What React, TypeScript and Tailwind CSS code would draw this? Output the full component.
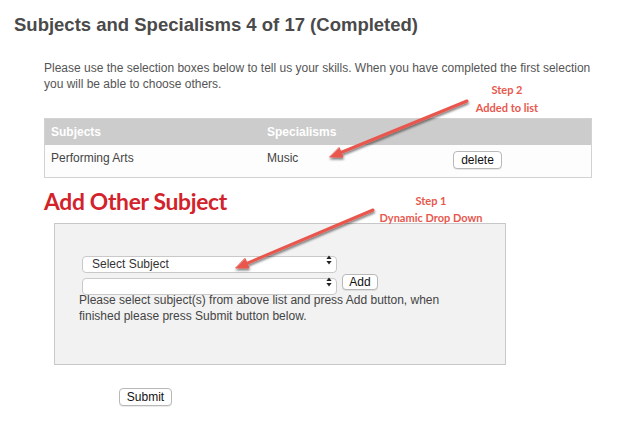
import React from 'react';

const arial = { fontFamily: '"Liberation Sans", Arial, sans-serif' };
const lato = { fontFamily: 'Lato, "Open Sans", sans-serif' };

function UpDown() {
  return (
    <svg width="6" height="10" viewBox="0 0 6 10" className="pointer-events-none absolute right-[5px] top-1/2 -translate-y-1/2">
      <path d="M3 0.5 L5.6 4 H0.4 Z" fill="#222" />
      <path d="M3 9.5 L5.6 6 H0.4 Z" fill="#222" />
    </svg>
  );
}

function FakeSelect({ label }: { label: string }) {
  return (
    <div className="relative h-[17px] w-[255px]">
      <select
        className="h-full w-full appearance-none rounded-[4px] border border-[#c9c9c9] bg-white pl-[9px] text-[12px] leading-[15px] text-[#333] outline-none"
        style={arial}
        defaultValue={label}
      >
        <option value={label}>{label}</option>
      </select>
      <UpDown />
    </div>
  );
}

function SmallButton({ children, className = '' }: { children: React.ReactNode; className?: string }) {
  return (
    <button
      type="button"
      className={`flex items-center justify-center rounded-[4px] border border-[#b8b8b8] bg-white text-[12px] text-[#111] shadow-[0_1px_0_rgba(0,0,0,0.08)] ${className}`}
      style={arial}
    >
      {children}
    </button>
  );
}

function Arrows() {
  return (
    <svg width="629" height="437" className="pointer-events-none absolute left-0 top-0" viewBox="0 0 629 437">
      <defs>
        <filter id="shadow" x="-20%" y="-20%" width="140%" height="140%">
          <feDropShadow dx="0.5" dy="2" stdDeviation="1.3" floodColor="#000" floodOpacity="0.5" />
        </filter>
      </defs>
      <g filter="url(#shadow)" fill="#e8574d" stroke="#e8574d" strokeLinecap="round">
        <line x1="467" y1="101" x2="341" y2="152.5" strokeWidth="3" />
        <path d="M330 157 L343 157.1 L339.2 147.9 Z" strokeWidth="1" strokeLinejoin="round" />
        <line x1="373" y1="210" x2="247" y2="263.3" strokeWidth="3" />
        <path d="M236 268 L249 267.9 L245.1 258.7 Z" strokeWidth="1" strokeLinejoin="round" />
      </g>
    </svg>
  );
}

export default function App() {
  return (
    <div className="relative h-[437px] w-[629px] overflow-hidden bg-white" style={arial}>
      <h1 className="pl-[14px] pt-[14px] text-[18.5px] font-bold leading-[22px] text-[#4a4a4a]">
        Subjects and Specialisms 4 of 17 (Completed)
      </h1>

      <div className="ml-[44px] w-[548px]">
        <p className="mt-[24px] text-[12px] leading-[16px] text-[#555]">
          Please use the selection boxes below to tell us your skills. When you have completed the first selection
          you will be able to choose others.
        </p>

        <div className="mt-[26px] border border-[#d2d2d2]">
          <div className="flex h-[26px] items-center bg-[#cccccc] text-[12px] font-bold text-white">
            <div className="w-[216px] pl-[6px]">Subjects</div>
            <div className="pl-[6px]">Specialisms</div>
          </div>
          <div className="flex h-[32px] items-start bg-[#fdfdfd] text-[12px] leading-[16px] text-[#444]">
            <div className="w-[216px] pl-[6px] pt-[5px]">Performing Arts</div>
            <div className="w-[186px] pl-[6px] pt-[5px]">Music</div>
            <div className="pl-[6px] pt-[6px]">
              <SmallButton className="h-[18px] w-[49px]">delete</SmallButton>
            </div>
          </div>
        </div>

        <h2 className="mt-[9px] text-[22.8px] font-bold leading-[28px] tracking-[-0.3px] text-[#d2232a]" style={lato}>
          Add Other Subject
        </h2>

        <div className="ml-[10px] mt-[8px] h-[142px] w-[452px] border border-[#c8c8c8] bg-[#f2f2f2] pl-[24px] pt-[27px]">
          <div className="ml-[3px] flex flex-col gap-[5px]">
            <FakeSelect label="Select Subject" />
            <div className="flex items-center gap-[5px]">
              <FakeSelect label="" />
              <SmallButton className="h-[16px] w-[36px]">Add</SmallButton>
            </div>
          </div>
          <p className="mt-[2px] max-w-[380px] text-[12px] leading-[16px] text-[#444]">
            Please select subject(s) from above list and press Add button, when finished please press Submit button
            below.
          </p>
        </div>

        <div className="ml-[75px] mt-[23px]">
          <SmallButton className="h-[18px] w-[53px]">Submit</SmallButton>
        </div>
      </div>

      <Arrows />

      <div
        className="absolute left-[457px] top-[83px] flex w-[100px] flex-col gap-[4px] text-center text-[11px] font-bold leading-[14px] text-[#e8574d]"
        style={lato}
      >
        <span>Step 2</span>
        <span>Added to list</span>
      </div>
      <div
        className="absolute left-[371px] top-[194px] flex w-[120px] flex-col gap-[3px] text-center text-[11px] font-bold leading-[14px] text-[#e8574d]"
        style={lato}
      >
        <span>Step 1</span>
        <span>Dynamic Drop Down</span>
      </div>
    </div>
  );
}
